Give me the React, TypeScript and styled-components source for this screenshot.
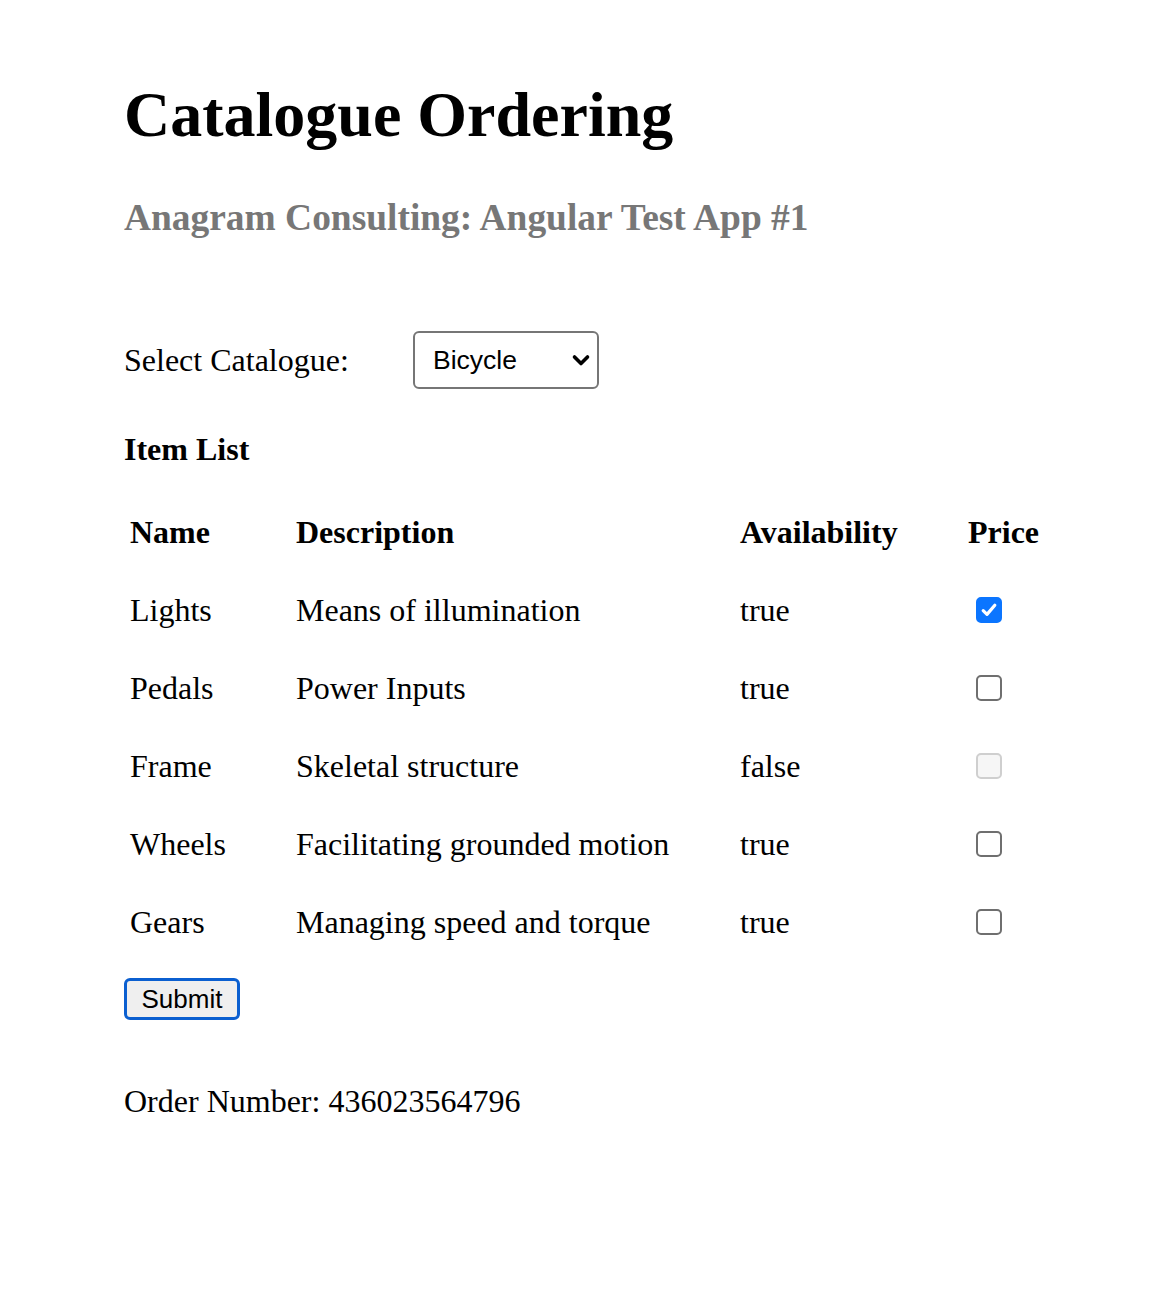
import React, { useState } from 'react'
import styled, { createGlobalStyle } from 'styled-components'

const GlobalStyle = createGlobalStyle`
  html, body {
    margin: 0;
    padding: 0;
    background: #ffffff;
  }
  body {
    font-family: "Liberation Serif", "Times New Roman", serif;
    color: #000000;
  }
`

const Page = styled.main`
  padding: 75px 0 120px 124px;
`

const Title = styled.h1`
  margin: 0;
  font-size: 64px;
  line-height: 80px;
  font-weight: 700;
`

const Subtitle = styled.h3`
  margin: 39px 0 0;
  font-size: 37.44px;
  line-height: 48px;
  font-weight: 700;
  color: #777777;
`

const SelectRow = styled.div`
  display: flex;
  align-items: center;
  margin-top: 89px;
  height: 58px;
`

const Label = styled.label`
  width: 289px;
  font-size: 32px;
  line-height: 58px;
`

const SelectWrap = styled.div`
  position: relative;
  width: 186px;
  height: 58px;
`

const Select = styled.select`
  appearance: none;
  box-sizing: border-box;
  width: 100%;
  height: 100%;
  padding: 0 0 0 18px;
  border: 2px solid #767676;
  border-radius: 6px;
  background: #ffffff;
  font-family: "Liberation Sans", Arial, sans-serif;
  font-size: 26.5px;
  color: #000000;
  outline: none;
`

const Chevron = styled.svg`
  position: absolute;
  right: 7px;
  top: 50%;
  width: 22px;
  height: 22px;
  margin-top: -11px;
  pointer-events: none;
`

const SectionHead = styled.h4`
  margin: 40px 0 0;
  font-size: 32px;
  line-height: 40px;
  font-weight: 700;
`

const Table = styled.table`
  margin-top: 24px;
  border-collapse: separate;
  border-spacing: 0;
  font-size: 32px;
`

const Th = styled.th<{ $w: number }>`
  width: ${p => p.$w}px;
  height: 78px;
  padding: 0 0 0 6px;
  box-sizing: border-box;
  text-align: left;
  font-weight: 700;
  line-height: 78px;
`

const Td = styled.td`
  height: 78px;
  padding: 0 0 0 6px;
  line-height: 78px;
  vertical-align: middle;
`

const CheckLabel = styled.label`
  display: inline-flex;
  margin: 0 0 8px 8px;
  vertical-align: middle;
  cursor: pointer;
`

const HiddenInput = styled.input`
  position: absolute;
  opacity: 0;
  width: 0;
  height: 0;
  margin: 0;
`

const Box = styled.span<{ $checked: boolean; $disabled: boolean }>`
  box-sizing: border-box;
  display: inline-flex;
  align-items: center;
  justify-content: center;
  width: 26px;
  height: 26px;
  border-radius: 5px;
  border: 2px solid
    ${p => (p.$checked ? '#0b75ff' : p.$disabled ? '#cfcfcf' : '#6f6f6f')};
  background: ${p =>
    p.$checked ? '#0b75ff' : p.$disabled ? '#f6f6f6' : '#ffffff'};
`

const SubmitButton = styled.button`
  display: block;
  box-sizing: border-box;
  margin-top: 17px;
  width: 116px;
  height: 42px;
  padding: 0;
  border: 3px solid #0b5fd0;
  border-radius: 6px;
  background: #efefef;
  font-family: "Liberation Sans", Arial, sans-serif;
  font-size: 26px;
  color: #000000;
`

const OrderLine = styled.p`
  margin: 61px 0 0;
  font-size: 32px;
  line-height: 40px;
`

interface Item {
  name: string
  description: string
  available: boolean
}

const items: Item[] = [
  { name: 'Lights', description: 'Means of illumination', available: true },
  { name: 'Pedals', description: 'Power Inputs', available: true },
  { name: 'Frame', description: 'Skeletal structure', available: false },
  { name: 'Wheels', description: 'Facilitating grounded motion', available: true },
  { name: 'Gears', description: 'Managing speed and torque', available: true },
]

const CheckBox = ({
  checked,
  disabled,
  onChange,
}: {
  checked: boolean
  disabled: boolean
  onChange: () => void
}) => (
  <CheckLabel>
    <HiddenInput
      type="checkbox"
      checked={checked}
      disabled={disabled}
      onChange={onChange}
    />
    <Box $checked={checked} $disabled={disabled}>
      {checked && (
        <svg width="18" height="18" viewBox="0 0 18 18">
          <path
            d="M3.2 9.6 L7 13.4 L14.8 4.2"
            fill="none"
            stroke="#ffffff"
            strokeWidth="3.2"
            strokeLinecap="round"
            strokeLinejoin="round"
          />
        </svg>
      )}
    </Box>
  </CheckLabel>
)

const App = () => {
  const [selected, setSelected] = useState<boolean[]>([true, false, false, false, false])

  const toggle = (i: number) =>
    setSelected(prev => prev.map((v, j) => (j === i ? !v : v)))

  return (
    <>
      <GlobalStyle />
      <Page>
        <Title>Catalogue Ordering</Title>
        <Subtitle>Anagram Consulting: Angular Test App #1</Subtitle>

        <SelectRow>
          <Label htmlFor="catalogue">Select Catalogue:</Label>
          <SelectWrap>
            <Select id="catalogue" defaultValue="bicycle">
              <option value="bicycle">Bicycle</option>
              <option value="car">Car</option>
            </Select>
            <Chevron viewBox="0 0 22 22">
              <path
                d="M4.5 8 L11 14.5 L17.5 8"
                fill="none"
                stroke="#000000"
                strokeWidth="3.6"
                strokeLinecap="round"
                strokeLinejoin="round"
              />
            </Chevron>
          </SelectWrap>
        </SelectRow>

        <SectionHead>Item List</SectionHead>

        <Table>
          <thead>
            <tr>
              <Th $w={166}>Name</Th>
              <Th $w={444}>Description</Th>
              <Th $w={228}>Availability</Th>
              <Th $w={110}>Price</Th>
            </tr>
          </thead>
          <tbody>
            {items.map((item, i) => (
              <tr key={item.name}>
                <Td>{item.name}</Td>
                <Td>{item.description}</Td>
                <Td>{String(item.available)}</Td>
                <Td>
                  <CheckBox
                    checked={selected[i]}
                    disabled={!item.available}
                    onChange={() => toggle(i)}
                  />
                </Td>
              </tr>
            ))}
          </tbody>
        </Table>

        <SubmitButton type="button">Submit</SubmitButton>

        <OrderLine>Order Number: 436023564796</OrderLine>
      </Page>
    </>
  )
}

export default App
